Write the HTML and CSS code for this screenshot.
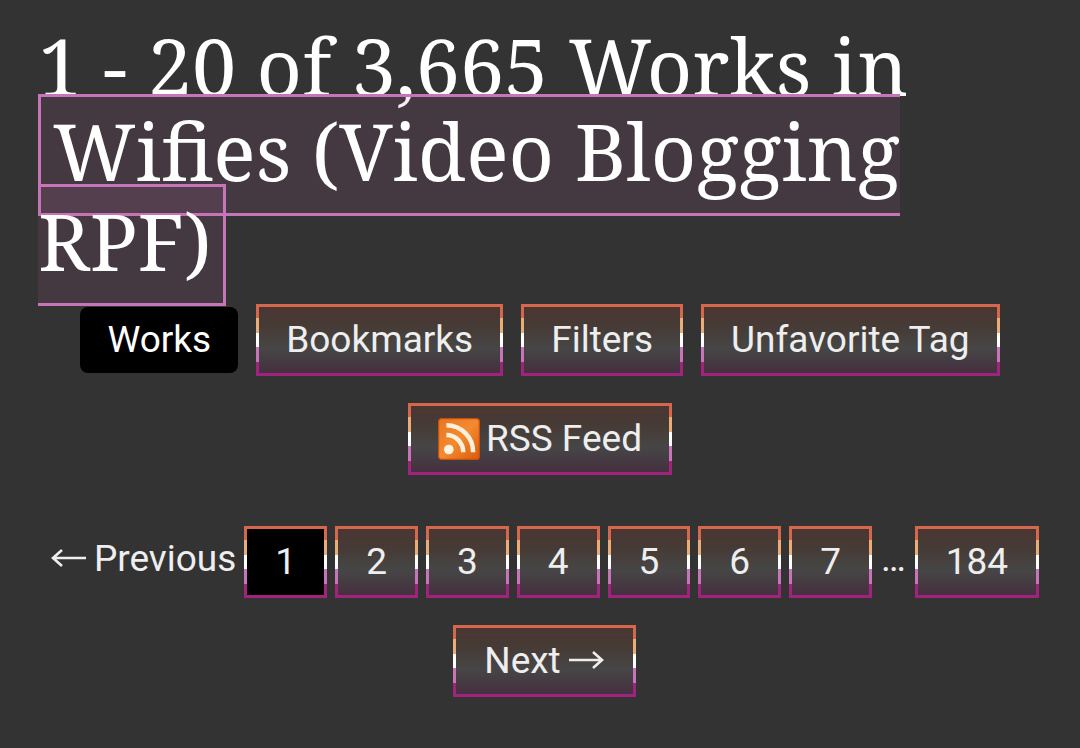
FILE: index.html
```html
<!DOCTYPE html>
<html lang="en">
<head>
<meta charset="utf-8">
<meta name="viewport" content="width=device-width, initial-scale=1">
<title>Wifies (Video Blogging RPF) - Works</title>
<link rel="stylesheet" href="styles.css">
</head>
<body>
<main class="page">
  <h2 class="heading">1 - 20 of 3,665 Works in <a class="tag" href="#tag">Wifies (Video Blogging RPF)</a></h2>
  <nav class="actions" aria-label="Tag navigation">
    <span class="current">Works</span>
    <a class="button" href="#bookmarks">Bookmarks</a>
    <a class="button" href="#filters">Filters</a>
    <button class="button" type="button">Unfavorite Tag</button>
    <a class="button feed" href="#feed"><svg class="feed-icon" viewBox="0 0 14 14" aria-hidden="true">
      <defs>
        <linearGradient id="feed-fill" x1="0" y1="0" x2="1" y2="1"><stop offset="0" stop-color="#e87522"/><stop offset=".5" stop-color="#f38a30"/><stop offset="1" stop-color="#d95a0c"/></linearGradient>
        <filter id="feed-soft"><feGaussianBlur stdDeviation=".22"/></filter>
      </defs>
      <rect x=".2" y=".2" width="13.6" height="13.6" rx="1" fill="url(#feed-fill)" stroke="#c8500c" stroke-width=".4"/>
      <g filter="url(#feed-soft)">
        <circle cx="3.6" cy="10.5" r="1.6" fill="#fff3e4"/>
        <path d="M2.8 5.7a5.6 5.6 0 0 1 5.6 5.7M2.8 2.4a8.9 8.9 0 0 1 8.9 9" fill="none" stroke="#fff0dc" stroke-width="1.5"/>
      </g>
    </svg>RSS Feed</a>
  </nav>
  <nav class="pagination" aria-label="Pagination">
    <span class="previous"><svg class="arrow" viewBox="0 0 36 24" aria-hidden="true"><path d="M36 12H3M12 4L3 12L12 20"/></svg>Previous</span>
    <a class="button selected" href="#p1" aria-current="page">1</a>
    <a class="button" href="#p2">2</a>
    <a class="button" href="#p3">3</a>
    <a class="button" href="#p4">4</a>
    <a class="button" href="#p5">5</a>
    <a class="button" href="#p6">6</a>
    <a class="button" href="#p7">7</a>
    <span class="gap">…</span>
    <a class="button" href="#p184">184</a>
    <a class="button next" href="#next">Next<svg class="arrow" viewBox="0 0 36 24" aria-hidden="true"><path d="M0 12H33M24 4L33 12L24 20"/></svg></a>
  </nav>
</main>
</body>
</html>
```
FILE: styles.css
```css
body {
  margin: 0;
  background: #333;
  color: #eee;
  font: 37px/42px Roboto, sans-serif;
}

.page {
  padding: 26px 38px;
}

.heading {
  margin: 0;
  padding-right: 80px;
  color: #fff;
  font: 400 79px/80px "Noto Serif", "DejaVu Serif Condensed", "DejaVu Serif", serif;
}

.tag {
  padding: 0 12px 9px;
  border: 3px solid #c675b8;
  background: rgba(200, 105, 175, 0.12);
  color: #fff;
  line-height: 90px;
  text-decoration: none;
}

.actions,
.pagination {
  display: flex;
  flex-wrap: wrap;
  justify-content: center;
  align-items: center;
}

.actions {
  gap: 27px 18px;
  margin-top: 18px;
}

.current {
  padding: 12px 27px;
  border-radius: 8px;
  background: #000;
  color: #fff;
}

.button {
  display: flex;
  align-items: center;
  box-sizing: border-box;
  padding: 12px 27px;
  border: 3px solid transparent;
  background:
    linear-gradient(#4a3632, #463b36 30%, #464646 62%, #45303f) padding-box,
    linear-gradient(#d4674c 20%, #e9ae78 20% 40%, #fff 40% 60%, #c675b8 60% 80%, #a0237c 80%) border-box;
  color: #eee;
  font: inherit;
  text-decoration: none;
}

.feed-icon {
  width: 42px;
  height: 42px;
  margin-right: 6px;
}

.pagination {
  gap: 27px 8px;
  margin-top: 51px;
  padding-left: 9px;
}

.pagination .button {
  padding: 12px 28px;
}

.pagination .selected {
  background:
    linear-gradient(#000, #000) padding-box,
    linear-gradient(#d4674c 20%, #e9ae78 20% 40%, #fff 40% 60%, #c675b8 60% 80%, #a0237c 80%) border-box;
}

.previous {
  display: flex;
  align-items: center;
  padding-bottom: 6px;
}

.arrow {
  width: 36px;
  height: 24px;
  margin-bottom: 3px;
  fill: none;
  stroke: currentColor;
  stroke-width: 2.6;
}

.previous .arrow {
  margin-right: 8px;
}

.next .arrow {
  margin-left: 8px;
}

.gap {
  padding: 0 1px 6px;
}
```
